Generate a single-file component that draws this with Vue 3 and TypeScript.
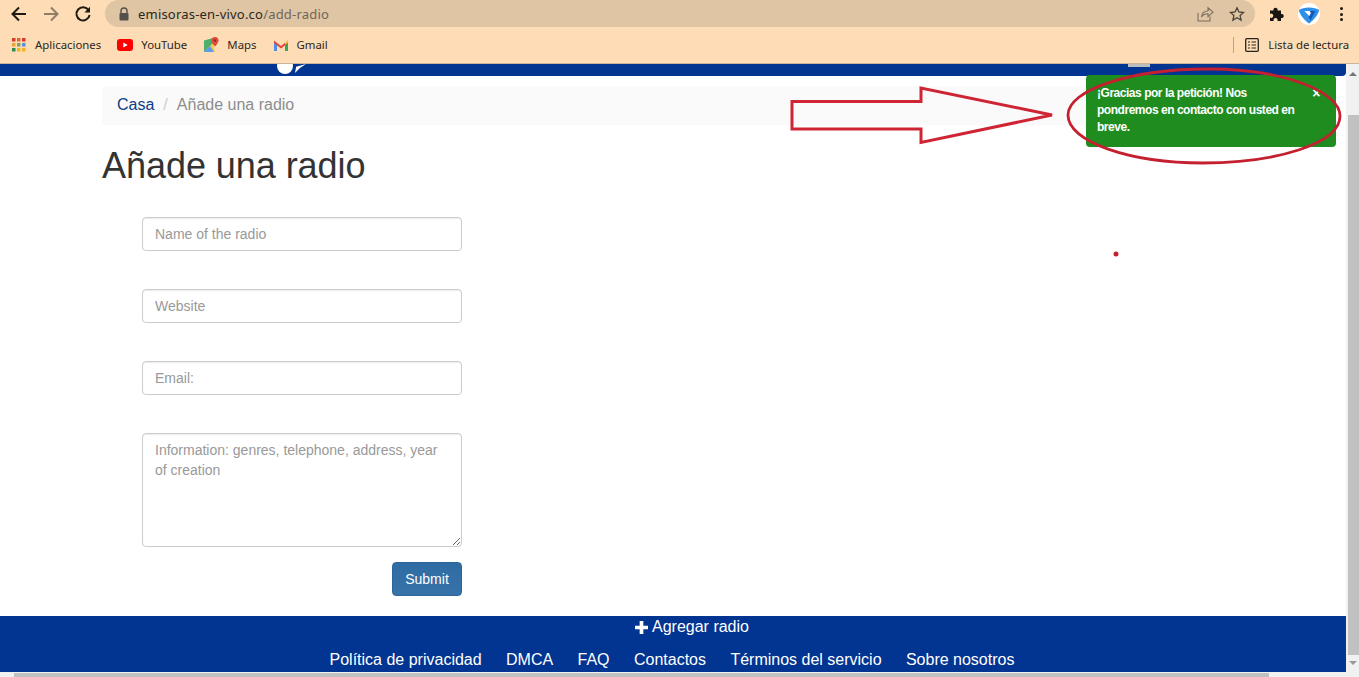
<script setup lang="ts">
const footerLinks: string[] = ['Política de privacidad', 'DMCA', 'FAQ', 'Contactos', 'Términos del servicio', 'Sobre nosotros']
</script>

<template>
  <div class="screen">
    <div class="toolbar">
      <svg class="nav" width="18" height="18" viewBox="0 0 18 18"><path d="M16 9H3M9 2.500 2.500 9 9 15.500" fill="none" stroke="#1f1a14" stroke-width="2"/></svg>
      <svg class="nav" width="18" height="18" viewBox="0 0 18 18"><path d="M2 9h13M9 2.500 15.500 9 9 15.500" fill="none" stroke="#8f7d68" stroke-width="2"/></svg>
      <svg class="nav reload" width="18" height="18" viewBox="0 0 18 18"><path d="M14.600 5.200A6.600 6.600 0 1 0 15.600 10" fill="none" stroke="#1f1a14" stroke-width="2"/><path d="M16 1.800V7.400H10.400Z" fill="#1f1a14"/></svg>
      <div class="omnibox">
        <svg width="12" height="14" viewBox="0 0 12 14"><path d="M3 6V4a3 3 0 0 1 6 0v2" fill="none" stroke="#55504a" stroke-width="1.400"/><rect x="1.500" y="6" width="9" height="7.500" rx="1" fill="#55504a"/></svg>
        <span class="url"><span class="host">emisoras-en-vivo.co</span>/add-radio</span>
        <span class="spacer"></span>
        <svg width="18" height="18" viewBox="0 0 18 18"><path d="M2 8v8h12v-4.500M5.500 12c.5-4 3-6 6.500-6V2.800l5 4.400-5 4.400V8.800c-3 0-5 1-6.500 3.200Z" fill="none" stroke="#7a6f61" stroke-width="1.100"/></svg>
        <svg class="star" width="18" height="18" viewBox="0 0 18 18"><path d="m9 2.800 1.900 4.200 4.600.5-3.400 3.100 1 4.500L9 12.800l-4.100 2.300 1-4.500-3.400-3.100 4.600-.5Z" fill="none" stroke="#4a4338" stroke-width="1.300"/></svg>
      </div>
      <svg class="puzzle" width="16" height="16" viewBox="0 0 16 16"><path d="M1 4.500h3.500a2.100 2.100 0 1 1 4 0H12V8a2.100 2.100 0 1 1 0 4v3H8.500a2.100 2.100 0 1 0-3.800 0H1V11.500a2.100 2.100 0 1 0 0-3.500Z" fill="#191510"/></svg>
      <svg class="ext" width="22" height="22" viewBox="0 0 22 22">
        <circle cx="11" cy="11" r="11" fill="#fff"/>
        <path d="M.8 7C5 3.500 17 3.500 21.200 7 20 12 15.500 17.500 11 20.500 6.500 17.500 2 12 .8 7Z" fill="#2f90e8"/>
        <path d="M6.500 8h10.500l-4 7Z" fill="#fff"/>
        <path d="M12 8h5.500l-5 9.500-1.800-3.500 2.600-4.500h-1.300Z" fill="#1259b5"/>
      </svg>
      <div class="dots"><i></i><i></i><i></i></div>
    </div>

    <div class="bookmarks">
      <div class="bm first">
        <svg width="14" height="14" viewBox="0 0 14 14">
          <rect x="0" y="0" width="3.500" height="3.500" fill="#d93a2e"/><rect x="5" y="0" width="3.500" height="3.500" fill="#d96a3a"/><rect x="10" y="0" width="3.500" height="3.500" fill="#d93a2e"/>
          <rect x="0" y="5" width="3.500" height="3.500" fill="#e8a33a"/><rect x="5" y="5" width="3.500" height="3.500" fill="#7fa05a"/><rect x="10" y="5" width="3.500" height="3.500" fill="#5a90d9"/>
          <rect x="0" y="10" width="3.500" height="3.500" fill="#2d8f4c"/><rect x="5" y="10" width="3.500" height="3.500" fill="#f0b429"/><rect x="10" y="10" width="3.500" height="3.500" fill="#f0b429"/>
        </svg>
        <span>Aplicaciones</span>
      </div>
      <div class="bm yt">
        <svg width="16" height="12" viewBox="0 0 16 12"><rect width="16" height="12" rx="3" fill="#f00"/><path d="m6.300 3.400 4.400 2.600-4.400 2.600Z" fill="#fff"/></svg>
        <span>YouTube</span>
      </div>
      <div class="bm maps">
        <svg width="16" height="16" viewBox="0 0 16 16"><path d="M1 3.500 10 1v14l-9 0Z" fill="#4caf6d"/><path d="M1 15 10 6l2 9Z" fill="#f6c945"/><path d="M1 15 7 9l4 6Z" fill="#5b9bf0"/><path d="M12 0a3.500 3.500 0 0 0-3.500 3.500C8.500 6 12 9.500 12 9.500s3.500-3.500 3.500-6A3.500 3.500 0 0 0 12 0Z" fill="#df4a3c"/><circle cx="12" cy="3.500" r="1.200" fill="#8f2a20"/></svg>
        <span>Maps</span>
      </div>
      <div class="bm gmail">
        <svg width="14" height="12" viewBox="0 0 14 12"><path d="M0 2v10h3V4.500Z" fill="#4d8ee8"/><path d="M14 2v10h-3V4.500Z" fill="#3aa757"/><path d="M0 1.500 7 7l7-5.500V4L7 9.500 0 4Z" fill="#e0473a"/><path d="M11 3.300 14 1v2.500l-3 2.300Z" fill="#f6c945"/></svg>
        <span>Gmail</span>
      </div>
      <span class="spacer"></span>
      <div class="divider"></div>
      <div class="bm reading">
        <svg width="14" height="14" viewBox="0 0 14 14"><rect x=".7" y=".7" width="12.600" height="12.600" rx="1" fill="none" stroke="#2a241c" stroke-width="1.300"/><path d="M3 4h2M6.500 4H11M3 7h2M6.500 7H11M3 10h2M6.500 10H11" stroke="#2a241c" stroke-width="1.200"/></svg>
        <span>Lista de lectura</span>
      </div>
    </div>

    <div class="viewport">
      <div class="page-wrap">
        <div class="page">
          <header class="site-head"><span class="logo-a"></span><span class="logo-b"></span><span class="head-tab"></span></header>
          <main class="container">
            <nav class="crumb"><a>Casa</a><span class="sep">/</span><span class="cur">Añade una radio</span></nav>
            <h1>Añade una radio</h1>
            <form class="form" @submit.prevent>
              <input type="text" placeholder="Name of the radio" />
              <input type="text" placeholder="Website" />
              <input type="text" placeholder="Email:" />
              <textarea placeholder="Information: genres, telephone, address, year of creation"></textarea>
              <div class="actions"><button type="submit">Submit</button></div>
            </form>
          </main>
          <footer class="site-foot">
            <div class="add"><svg width="13" height="13" viewBox="0 0 12 12"><path d="M4.300 0h3.400v4.300H12v3.400H7.700V12H4.300V7.700H0V4.300h4.300Z" fill="#fff"/></svg><span>Agregar radio</span></div>
            <div class="links"><a v-for="l in footerLinks" :key="l">{{ l }}</a></div>
          </footer>
        </div>
        <div class="hbar"><div class="hthumb"></div></div>
      </div>
      <div class="vbar">
        <span class="up"></span>
        <div class="vthumb"></div>
        <span class="down"></span>
      </div>
    </div>

    <div class="toast"><span class="close">×</span>¡Gracias por la petición! Nos pondremos en contacto con usted en breve.</div>

    <svg class="marks" width="1359" height="677" viewBox="0 0 1359 677">
      <path d="M792 101.500H921V88L1052 115 921 142.500V129H792Z" fill="none" stroke="#cf2433" stroke-width="3"/>
      <path d="M1208 69C1285 69 1340 92 1340 116C1340 144 1275 163 1203 163C1130 163 1068 142 1068 115C1068 90 1130 69 1208 69Z" fill="none" stroke="#c4202f" stroke-width="2.800"/>
      <circle cx="1116" cy="254" r="2.500" fill="#c4202f"/>
    </svg>
  </div>
</template>

<style>
html, body { margin: 0; padding: 0; overflow: hidden; }
</style>

<style scoped>
.screen { position: relative; width: 1359px; height: 677px; overflow: hidden; display: flex; flex-direction: column; background: #fff; font-family: "Liberation Sans", Arial, sans-serif; }
.toolbar { height: 28px; flex: none; background: #fedcb6; display: flex; align-items: center; padding: 0 0 0 10px; box-sizing: border-box; }
.nav { flex: none; margin-right: 14px; }
.nav.reload { margin-right: 13px; }
.omnibox { flex: none; width: 1150px; height: 27px; margin-top: -1px; background: #dfc5a3; border-radius: 14px; display: flex; align-items: center; padding: 0 9px 0 13px; box-sizing: border-box; }
.url { margin-left: 8px; font-family: "Noto Sans", sans-serif; font-size: 13px; letter-spacing: .2px; color: #6e655a; }
.host { color: #2c2720; }
.spacer { flex: 1; }
.star { margin-left: 14px; }
.puzzle { margin-left: 14px; flex: none; }
.ext { margin-left: 13px; flex: none; }
.dots { margin-left: 20px; display: flex; flex-direction: column; gap: 2.500px; }
.dots i { display: block; width: 3px; height: 3px; border-radius: 50%; background: #1f1a14; }

.bookmarks { height: 36px; flex: none; background: #fedcb6; border-bottom: 1px solid #c9b69d; box-sizing: border-box; display: flex; align-items: center; padding: 0 10px 2px 12px; }
.bm { display: flex; align-items: center; font-family: "Noto Sans", sans-serif; font-size: 11.400px; color: #2c2720; }
.bm.first span { margin-left: 9px; }
.bm.yt { margin-left: 16px; }
.bm.yt span { margin-left: 8px; }
.bm.maps { margin-left: 16px; }
.bm.maps span { margin-left: 8px; }
.bm.gmail { margin-left: 18px; }
.bm.gmail span { margin-left: 8px; }
.divider { width: 1px; height: 16px; background: #b7a48c; }
.reading { margin-left: 11px; }
.reading span { margin-left: 9px; letter-spacing: -.02px; }

.viewport { flex: 1; min-height: 0; display: flex; }
.page-wrap { flex: 1; min-width: 0; display: flex; flex-direction: column; }
.page { flex: 1; min-height: 0; overflow: hidden; display: flex; flex-direction: column; }
.site-head { position: relative; height: 12px; flex: none; background: #023491; border-bottom-right-radius: 4px; }
.logo-a { position: absolute; left: 277px; top: -6px; width: 16px; height: 16px; border-radius: 50%; background: #fff; }
.logo-b { position: absolute; left: 295px; top: 0; width: 11px; height: 9px; background: #fff; clip-path: polygon(0 100%, 10% 30%, 100% 0, 45% 45%); }
.head-tab { position: absolute; left: 1128px; top: 0; width: 22px; height: 3px; background: #bdbdbd; }

.container { flex: 1; padding: 10px 0 0 102px; box-sizing: border-box; }
.crumb { width: 1142px; height: 39px; box-sizing: border-box; background: #fafafa; border-radius: 4px; padding: 0 15px 2px; display: flex; align-items: center; font-size: 16px; }
.crumb a { color: #0e3d87; }
.sep { color: #ccc; margin: 0 9px; }
.cur { color: #8d8d8d; }
h1 { margin: 21px 0 0; font-size: 36px; line-height: 40px; font-weight: 400; color: #333; letter-spacing: -.05px; }
.form { width: 320px; margin: 31px 0 0 40px; display: flex; flex-direction: column; }
input, textarea { display: block; width: 320px; box-sizing: border-box; border: 1px solid #ccc; border-radius: 4px; background: #fff; padding: 6px 12px; font-family: inherit; font-size: 14px; line-height: 20px; color: #555; box-shadow: inset 0 1px 1px rgba(0, 0, 0, .075); outline: none; margin: 0; }
input { height: 34px; margin-bottom: 38px; }
textarea { height: 114px; resize: vertical; }
input::placeholder, textarea::placeholder { color: #999; opacity: 1; }
.actions { display: flex; justify-content: flex-end; margin-top: 15px; }
button { width: 70px; height: 34px; box-sizing: border-box; border: 1px solid #2b669a; border-radius: 4px; background: linear-gradient(#2f6ca3, #3773a9); color: #fff; font-family: inherit; font-size: 14px; padding: 0; }

.site-foot { height: 56px; flex: none; background: #023491; color: #fff; display: flex; flex-direction: column; align-items: center; font-size: 16px; overflow: hidden; }
.add { height: 22px; display: flex; align-items: center; gap: 4px; margin: 0 0 0 38px; }
.links { margin: 12px 2px 0 0; display: flex; gap: 24.400px; line-height: 20px; }

.hbar { height: 5px; flex: none; background: #f1f1f1; padding-top: 1px; box-sizing: border-box; }
.hthumb { width: 1255px; height: 4px; margin-left: 14px; background: #c1c1c1; }
.vbar { width: 13px; flex: none; background: #f1f1f1; display: flex; flex-direction: column; align-items: center; }
.vthumb { width: 11px; margin-left: 2px; height: 540px; margin-top: 39px; background: #c1c1c1; }
.up { margin-top: 8px; width: 0; height: 0; border: 4px solid transparent; border-top: 0; border-bottom: 4px solid #777; }
.down { margin-top: 6px; width: 0; height: 0; border: 4px solid transparent; border-bottom: 0; border-top: 4px solid #999; }

.toast { position: absolute; left: 1086px; top: 75px; width: 250px; height: 72px; box-sizing: border-box; background: #1e8c1e; border-radius: 4px; padding: 10px 11px; color: #fff; font-size: 12px; font-weight: 700; line-height: 17px; letter-spacing: -.47px; }
.close { float: right; margin: 0 5px 0 10px; font-size: 14px; line-height: 17px; }
.marks { position: absolute; left: 0; top: 0; pointer-events: none; }
</style>
